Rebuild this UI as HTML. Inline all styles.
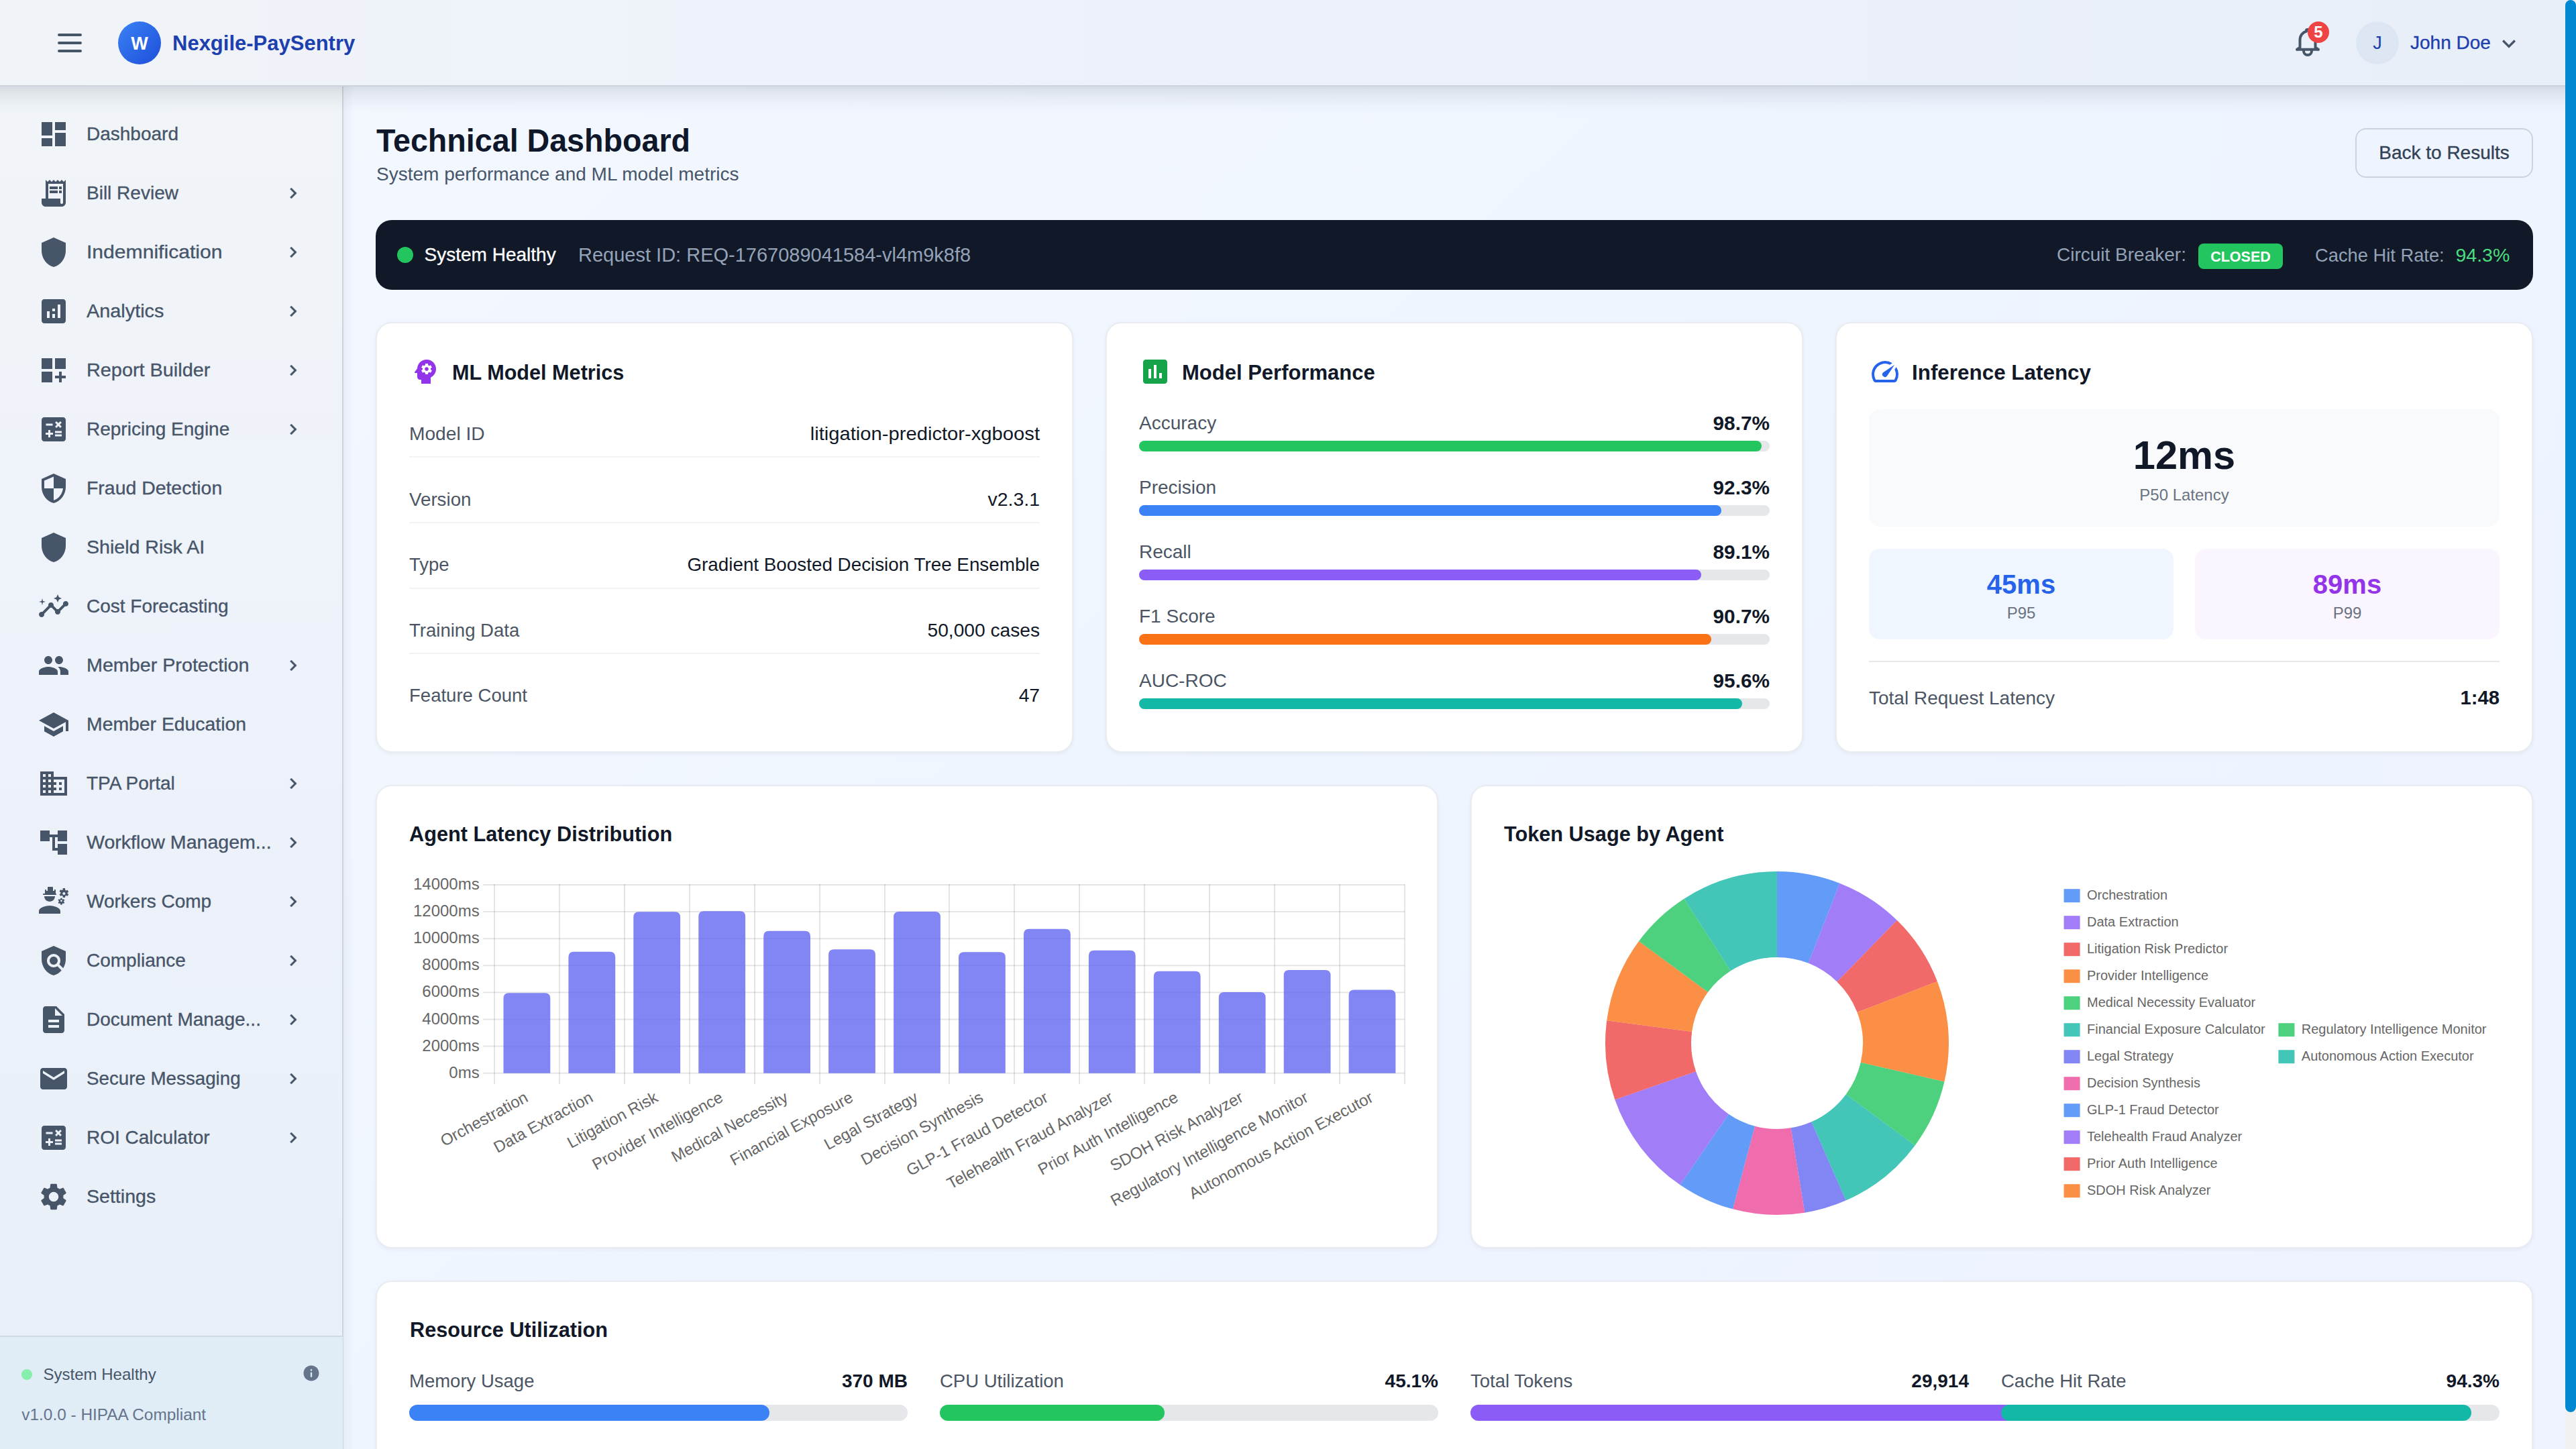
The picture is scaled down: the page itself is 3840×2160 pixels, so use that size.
<!DOCTYPE html><html><head><meta charset="utf-8"><style>
*{box-sizing:border-box;margin:0;padding:0}
html,body{width:3840px;height:2160px;overflow:hidden}
body{position:relative;font-family:"Liberation Sans",sans-serif;background:linear-gradient(135deg,#f4f8ff 0%,#eff5ff 50%,#eef3ff 100%);}
.t{position:absolute;line-height:1;white-space:nowrap}
.r{position:absolute}
</style></head><body><div class="r" style="left:0px;top:0px;width:3824px;height:128px;background:linear-gradient(90deg,#f0f4f8 0%,#eef2fa 28%,#e9eff8 100%);"></div>
<div class="r" style="left:0px;top:127px;width:3824px;height:2px;background:#cbd3dd;"></div>
<div class="r" style="left:86px;top:50px;width:36px;height:4px;background:#475569;border-radius:2px"></div>
<div class="r" style="left:86px;top:62px;width:36px;height:4px;background:#475569;border-radius:2px"></div>
<div class="r" style="left:86px;top:74px;width:36px;height:4px;background:#475569;border-radius:2px"></div>
<div class="r" style="left:176px;top:32px;width:64px;height:64px;border-radius:50%;background:linear-gradient(135deg,#3b82f6,#1d4ed8)"></div>
<div class="t" style="left:208.0px;top:51.6px;font-size:27px;color:#ffffff;font-weight:700;transform:translateX(-50%);transform-origin:50% 0;">W</div>
<div class="t" style="left:257.0px;top:48.8px;font-size:31px;color:#1e40af;font-weight:700;">Nexgile-PaySentry</div>
<svg class="r" style="left:0;top:0" width="3840" height="130" viewBox="0 0 3840 130"><g fill="none" stroke="#475569" stroke-width="4" stroke-linecap="round" stroke-linejoin="round"><path d="M3424 73.8H3456M3428.5 70.5L3424 73.8M3451.5 70.5L3456 73.8M3428.5 71V59.5C3428.5 52.5 3433 47.8 3438 46.8M3442 46.8C3447 47.8 3451.5 52.5 3451.5 59.5V71M3437.5 46.6C3437.5 43 3442.5 43 3442.5 46.6M3434 76A6 6 0 0 0 3446 76"/></g></svg>
<div class="r" style="left:3440px;top:32px;width:32px;height:32px;border-radius:50%;background:#ef4444"></div>
<div class="t" style="left:3456.0px;top:36.2px;font-size:24px;color:#ffffff;font-weight:700;transform:translateX(-50%);transform-origin:50% 0;">5</div>
<div class="r" style="left:3512px;top:32px;width:64px;height:64px;border-radius:50%;background:#dde7f4"></div>
<div class="t" style="left:3544.0px;top:50.7px;font-size:27px;color:#1e40af;font-weight:400;transform:translateX(-50%);transform-origin:50% 0;">J</div>
<div class="t" style="left:3593.0px;top:49.9px;font-size:28px;color:#1e40af;font-weight:400;-webkit-text-stroke:0.35px #1e40af;">John Doe</div>
<svg class="r" style="left:3720px;top:44.7px;overflow:visible" width="40" height="40" viewBox="0 0 24 24"><path fill="#475569" d="M16.59 8.59L12 13.17 7.41 8.59 6 10l6 6 6-6z"/></svg>
<div class="r" style="left:0px;top:130px;width:511px;height:1862px;background:linear-gradient(180deg,#f1f5f8 0%,#eef2fa 45%,#e9f0f8 100%);"></div>
<div class="r" style="left:510px;top:129px;width:2px;height:2031px;background:#cdd4de;"></div>
<div class="r" style="left:512px;top:129px;width:16px;height:2031px;background:linear-gradient(90deg,rgba(60,70,85,0.055),rgba(60,70,85,0));"></div>
<svg class="r" style="left:56px;top:176px;" width="48" height="48" viewBox="0 0 24 24"><path fill="#475569" d="M3 13h8V3H3v10zm0 8h8v-6H3v6zm10 0h8V11h-8v10zm0-18v6h8V3h-8z"/></svg>
<div class="t" style="left:129.0px;top:186.3px;font-size:28px;color:#475569;font-weight:400;-webkit-text-stroke:0.35px #475569;transform:scaleX(1.000);transform-origin:0 0;">Dashboard</div>
<svg class="r" style="left:56px;top:264px;" width="48" height="48" viewBox="0 0 24 24"><path fill="#475569" d="M19.5 3.5 18 2l-1.5 1.5L15 2l-1.5 1.5L12 2l-1.5 1.5L9 2 7.5 3.5 6 2v14H3v3c0 1.66 1.34 3 3 3h12c1.66 0 3-1.34 3-3V2l-1.5 1.5zM19 19c0 .55-.45 1-1 1s-1-.45-1-1v-3H8V5h11v14zM9 7h6v2H9zm7 0h2v2h-2zm-7 3h6v2H9zm7 0h2v2h-2z"/></svg>
<div class="t" style="left:129.0px;top:274.3px;font-size:28px;color:#475569;font-weight:400;-webkit-text-stroke:0.35px #475569;transform:scaleX(1.000);transform-origin:0 0;">Bill Review</div>
<svg class="r" style="left:421px;top:272px" width="32" height="32" viewBox="0 0 24 24"><path fill="#475569" stroke="#475569" stroke-width="0.35" d="M10 6L8.59 7.41 13.17 12l-4.58 4.59L10 18l6-6z"/></svg>
<svg class="r" style="left:56px;top:352px;" width="48" height="48" viewBox="0 0 24 24"><path fill="#475569" d="M12 1L3 5v6c0 5.55 3.84 10.74 9 12 5.16-1.26 9-6.45 9-12V5l-9-4z"/></svg>
<div class="t" style="left:129.0px;top:362.3px;font-size:28px;color:#475569;font-weight:400;-webkit-text-stroke:0.35px #475569;transform:scaleX(1.075);transform-origin:0 0;">Indemnification</div>
<svg class="r" style="left:421px;top:360px" width="32" height="32" viewBox="0 0 24 24"><path fill="#475569" stroke="#475569" stroke-width="0.35" d="M10 6L8.59 7.41 13.17 12l-4.58 4.59L10 18l6-6z"/></svg>
<svg class="r" style="left:56px;top:440px;" width="48" height="48" viewBox="0 0 24 24"><path fill="#475569" d="M19 3H5c-1.1 0-2 .9-2 2v14c0 1.1.9 2 2 2h14c1.1 0 2-.9 2-2V5c0-1.1-.9-2-2-2zM9 17H7v-5h2v5zm4 0h-2v-3h2v3zm0-5h-2v-2h2v2zm4 5h-2V7h2v10z"/></svg>
<div class="t" style="left:129.0px;top:450.3px;font-size:28px;color:#475569;font-weight:400;-webkit-text-stroke:0.35px #475569;transform:scaleX(1.030);transform-origin:0 0;">Analytics</div>
<svg class="r" style="left:421px;top:448px" width="32" height="32" viewBox="0 0 24 24"><path fill="#475569" stroke="#475569" stroke-width="0.35" d="M10 6L8.59 7.41 13.17 12l-4.58 4.59L10 18l6-6z"/></svg>
<svg class="r" style="left:56px;top:528px;" width="48" height="48" viewBox="0 0 24 24"><path fill="#475569" d="M3 3h8v8H3zm10 0h8v8h-8zM3 13h8v8H3zm15 0h-2v3h-3v2h3v3h2v-3h3v-2h-3z"/></svg>
<div class="t" style="left:129.0px;top:538.3px;font-size:28px;color:#475569;font-weight:400;-webkit-text-stroke:0.35px #475569;transform:scaleX(1.030);transform-origin:0 0;">Report Builder</div>
<svg class="r" style="left:421px;top:536px" width="32" height="32" viewBox="0 0 24 24"><path fill="#475569" stroke="#475569" stroke-width="0.35" d="M10 6L8.59 7.41 13.17 12l-4.58 4.59L10 18l6-6z"/></svg>
<svg class="r" style="left:56px;top:616px;" width="48" height="48" viewBox="0 0 24 24"><path fill="#475569" d="M19 3H5c-1.1 0-2 .9-2 2v14c0 1.1.9 2 2 2h14c1.1 0 2-.9 2-2V5c0-1.1-.9-2-2-2zm-5.97 4.06L14.09 6l1.41 1.41L16.91 6l1.06 1.06-1.41 1.41 1.41 1.41-1.06 1.06-1.41-1.4-1.41 1.41-1.06-1.06 1.41-1.41-1.41-1.42zm-6.78.66h5v1.5h-5v-1.5zM11.5 16h-2v2H8v-2H6v-1.5h2v-2h1.5v2h2V16zm6.5 1.25h-5v-1.5h5v1.5zm0-2.5h-5v-1.5h5v1.5z"/></svg>
<div class="t" style="left:129.0px;top:626.3px;font-size:28px;color:#475569;font-weight:400;-webkit-text-stroke:0.35px #475569;transform:scaleX(1.000);transform-origin:0 0;">Repricing Engine</div>
<svg class="r" style="left:421px;top:624px" width="32" height="32" viewBox="0 0 24 24"><path fill="#475569" stroke="#475569" stroke-width="0.35" d="M10 6L8.59 7.41 13.17 12l-4.58 4.59L10 18l6-6z"/></svg>
<svg class="r" style="left:56px;top:704px;" width="48" height="48" viewBox="0 0 24 24"><path fill="#475569" d="M12 1L3 5v6c0 5.55 3.84 10.74 9 12 5.16-1.26 9-6.45 9-12V5l-9-4zm0 10.99h7c-.53 4.12-3.28 7.79-7 8.94V12H5V6.3l7-3.11v8.8z"/></svg>
<div class="t" style="left:129.0px;top:714.3px;font-size:28px;color:#475569;font-weight:400;-webkit-text-stroke:0.35px #475569;transform:scaleX(1.015);transform-origin:0 0;">Fraud Detection</div>
<svg class="r" style="left:56px;top:792px;" width="48" height="48" viewBox="0 0 24 24"><path fill="#475569" d="M12 1L3 5v6c0 5.55 3.84 10.74 9 12 5.16-1.26 9-6.45 9-12V5l-9-4z"/></svg>
<div class="t" style="left:129.0px;top:802.3px;font-size:28px;color:#475569;font-weight:400;-webkit-text-stroke:0.35px #475569;transform:scaleX(1.020);transform-origin:0 0;">Shield Risk AI</div>
<svg class="r" style="left:56px;top:880px;" width="48" height="48" viewBox="0 0 24 24"><path fill="#475569" d="M21 8c-1.45 0-2.26 1.44-1.93 2.51l-3.55 3.56c-.3-.09-.74-.09-1.04 0l-2.55-2.55C12.27 10.45 11.46 9 10 9c-1.45 0-2.27 1.44-1.93 2.52l-4.56 4.55C2.44 15.74 1 16.55 1 18c0 1.1.9 2 2 2 1.45 0 2.26-1.44 1.93-2.51l4.55-4.56c.3.09.74.09 1.04 0l2.55 2.55C12.73 16.55 13.54 18 15 18c1.45 0 2.27-1.44 1.93-2.52l3.56-3.55c1.07.33 2.51-.48 2.51-1.93 0-1.1-.9-2-2-2zM15 9l.94-2.07L18 6l-2.06-.93L15 3l-.92 2.07L12 6l2.08.93zM3.5 11L4 9l2-.5L4 8l-.5-2L3 8l-2 .5L3 9z"/></svg>
<div class="t" style="left:129.0px;top:890.3px;font-size:28px;color:#475569;font-weight:400;-webkit-text-stroke:0.35px #475569;transform:scaleX(1.000);transform-origin:0 0;">Cost Forecasting</div>
<svg class="r" style="left:56px;top:968px;" width="48" height="48" viewBox="0 0 24 24"><path fill="#475569" d="M16 11c1.66 0 2.99-1.34 2.99-3S17.66 5 16 5c-1.66 0-3 1.34-3 3s1.34 3 3 3zm-8 0c1.66 0 2.99-1.34 2.99-3S9.66 5 8 5C6.34 5 5 6.34 5 8s1.34 3 3 3zm0 2c-2.33 0-7 1.17-7 3.5V19h14v-2.5c0-2.33-4.67-3.5-7-3.5zm8 0c-.29 0-.62.02-.97.05 1.16.84 1.97 1.97 1.97 3.45V19h6v-2.5c0-2.33-4.67-3.5-7-3.5z"/></svg>
<div class="t" style="left:129.0px;top:978.3px;font-size:28px;color:#475569;font-weight:400;-webkit-text-stroke:0.35px #475569;transform:scaleX(1.025);transform-origin:0 0;">Member Protection</div>
<svg class="r" style="left:421px;top:976px" width="32" height="32" viewBox="0 0 24 24"><path fill="#475569" stroke="#475569" stroke-width="0.35" d="M10 6L8.59 7.41 13.17 12l-4.58 4.59L10 18l6-6z"/></svg>
<svg class="r" style="left:56px;top:1056px;" width="48" height="48" viewBox="0 0 24 24"><path fill="#475569" d="M5 13.18v4L12 21l7-3.82v-4L12 17l-7-3.82zM12 3L1 9l11 6 9-4.91V17h2V9L12 3z"/></svg>
<div class="t" style="left:129.0px;top:1066.3px;font-size:28px;color:#475569;font-weight:400;-webkit-text-stroke:0.35px #475569;transform:scaleX(1.013);transform-origin:0 0;">Member Education</div>
<svg class="r" style="left:56px;top:1144px;" width="48" height="48" viewBox="0 0 24 24"><path fill="#475569" d="M12 7V3H2v18h20V7H12zM6 19H4v-2h2v2zm0-4H4v-2h2v2zm0-4H4V9h2v2zm0-4H4V5h2v2zm4 12H8v-2h2v2zm0-4H8v-2h2v2zm0-4H8V9h2v2zm0-4H8V5h2v2zm10 12h-8v-2h2v-2h-2v-2h2v-2h-2V9h8v10zm-2-8h-2v2h2v-2zm0 4h-2v2h2v-2z"/></svg>
<div class="t" style="left:129.0px;top:1154.3px;font-size:28px;color:#475569;font-weight:400;-webkit-text-stroke:0.35px #475569;transform:scaleX(1.000);transform-origin:0 0;">TPA Portal</div>
<svg class="r" style="left:421px;top:1152px" width="32" height="32" viewBox="0 0 24 24"><path fill="#475569" stroke="#475569" stroke-width="0.35" d="M10 6L8.59 7.41 13.17 12l-4.58 4.59L10 18l6-6z"/></svg>
<svg class="r" style="left:56px;top:1232px;" width="48" height="48" viewBox="0 0 24 24"><path fill="#475569" d="M22 11V3h-7v3H9V3H2v8h7V8h2v10h4v3h7v-8h-7v3h-2V8h2v3z"/></svg>
<div class="t" style="left:129.0px;top:1242.3px;font-size:28px;color:#475569;font-weight:400;-webkit-text-stroke:0.35px #475569;transform:scaleX(1.020);transform-origin:0 0;">Workflow Managem...</div>
<svg class="r" style="left:421px;top:1240px" width="32" height="32" viewBox="0 0 24 24"><path fill="#475569" stroke="#475569" stroke-width="0.35" d="M10 6L8.59 7.41 13.17 12l-4.58 4.59L10 18l6-6z"/></svg>
<svg class="r" style="left:56px;top:1320px;" width="48" height="48" viewBox="0 0 24 24"><path fill="#475569" d="M9 15c-2.67 0-8 1.34-8 4v2h16v-2c0-2.66-5.33-4-8-4zM5 8c0 2.21 1.79 4 4 4s4-1.79 4-4H5zM13.5 6V3.5c0-.26-.19-.5-.5-.5h-.5v1h-1V1.5c0-.28-.22-.5-.5-.5H8c-.28 0-.5.22-.5.5V4h-1V3H6c-.31 0-.5.24-.5.5V6H4.5c-.28 0-.5.22-.5.5s.22.5.5.5h9c.28 0 .5-.22.5-.5s-.22-.5-.5-.5zM22.17 5.53l.93-.83-.75-1.3-1.19.39c-.14-.11-.3-.2-.47-.27L20.44 2h-1.5l-.25 1.22c-.17.07-.33.16-.48.27l-1.18-.39-.75 1.3.93.83c-.02.17-.02.35 0 .52l-.93.85.75 1.3 1.2-.38c.13.1.28.18.43.25L18.94 9h1.5l.27-1.22c.16-.07.3-.15.44-.25l1.19.38.75-1.3-.93-.85c.03-.19.02-.36.01-.53zM19.69 7c-.55 0-1-.45-1-1s.45-1 1-1 1 .45 1 1-.45 1-1 1zM19.61 10.12l-.85.28c-.1-.08-.21-.14-.33-.19L18.25 9.34h-1.07l-.18.87c-.12.05-.24.12-.34.19l-.84-.28-.54.93.66.59c-.01.13-.01.25 0 .37l-.66.61.54.93.86-.27c.1.07.2.13.31.18l.18.88h1.07l.19-.87c.11-.05.22-.11.32-.18l.85.27.54-.93-.66-.61c.01-.13.01-.25 0-.37l.66-.59-.53-.94zM17.72 12.12c-.39 0-.71-.32-.71-.71s.32-.71.71-.71.71.32.71.71-.32.71-.71.71z"/></svg>
<div class="t" style="left:129.0px;top:1330.3px;font-size:28px;color:#475569;font-weight:400;-webkit-text-stroke:0.35px #475569;transform:scaleX(1.000);transform-origin:0 0;">Workers Comp</div>
<svg class="r" style="left:421px;top:1328px" width="32" height="32" viewBox="0 0 24 24"><path fill="#475569" stroke="#475569" stroke-width="0.35" d="M10 6L8.59 7.41 13.17 12l-4.58 4.59L10 18l6-6z"/></svg>
<svg class="r" style="left:56px;top:1408px;" width="48" height="48" viewBox="0 0 24 24"><path fill="#475569" d="M21 5l-9-4-9 4v6c0 5.55 3.84 10.74 9 12 2.3-.56 4.33-1.9 5.88-3.71l-3.12-3.12c-1.94 1.29-4.58 1.07-6.29-.64-1.95-1.95-1.95-5.12 0-7.07 1.95-1.95 5.12-1.95 7.07 0 1.71 1.71 1.92 4.35.64 6.29l2.9 2.9C20.29 15.69 21 13.38 21 11V5zM12 15c1.66 0 3-1.34 3-3s-1.34-3-3-3-3 1.34-3 3 1.34 3 3 3z"/></svg>
<div class="t" style="left:129.0px;top:1418.3px;font-size:28px;color:#475569;font-weight:400;-webkit-text-stroke:0.35px #475569;transform:scaleX(1.000);transform-origin:0 0;">Compliance</div>
<svg class="r" style="left:421px;top:1416px" width="32" height="32" viewBox="0 0 24 24"><path fill="#475569" stroke="#475569" stroke-width="0.35" d="M10 6L8.59 7.41 13.17 12l-4.58 4.59L10 18l6-6z"/></svg>
<svg class="r" style="left:56px;top:1496px;" width="48" height="48" viewBox="0 0 24 24"><path fill="#475569" d="M14 2H6c-1.1 0-1.99.9-1.99 2L4 20c0 1.1.89 2 1.99 2H18c1.1 0 2-.9 2-2V8l-6-6zm2 16H8v-2h8v2zm0-4H8v-2h8v2zm-3-5V3.5L18.5 9H13z"/></svg>
<div class="t" style="left:129.0px;top:1506.3px;font-size:28px;color:#475569;font-weight:400;-webkit-text-stroke:0.35px #475569;transform:scaleX(1.000);transform-origin:0 0;">Document Manage...</div>
<svg class="r" style="left:421px;top:1504px" width="32" height="32" viewBox="0 0 24 24"><path fill="#475569" stroke="#475569" stroke-width="0.35" d="M10 6L8.59 7.41 13.17 12l-4.58 4.59L10 18l6-6z"/></svg>
<svg class="r" style="left:56px;top:1584px;" width="48" height="48" viewBox="0 0 24 24"><path fill="#475569" d="M20 4H4c-1.1 0-1.99.9-1.99 2L2 18c0 1.1.9 2 2 2h16c1.1 0 2-.9 2-2V6c0-1.1-.9-2-2-2zm0 4l-8 5-8-5V6l8 5 8-5v2z"/></svg>
<div class="t" style="left:129.0px;top:1594.3px;font-size:28px;color:#475569;font-weight:400;-webkit-text-stroke:0.35px #475569;transform:scaleX(0.990);transform-origin:0 0;">Secure Messaging</div>
<svg class="r" style="left:421px;top:1592px" width="32" height="32" viewBox="0 0 24 24"><path fill="#475569" stroke="#475569" stroke-width="0.35" d="M10 6L8.59 7.41 13.17 12l-4.58 4.59L10 18l6-6z"/></svg>
<svg class="r" style="left:56px;top:1672px;" width="48" height="48" viewBox="0 0 24 24"><path fill="#475569" d="M19 3H5c-1.1 0-2 .9-2 2v14c0 1.1.9 2 2 2h14c1.1 0 2-.9 2-2V5c0-1.1-.9-2-2-2zm-5.97 4.06L14.09 6l1.41 1.41L16.91 6l1.06 1.06-1.41 1.41 1.41 1.41-1.06 1.06-1.41-1.4-1.41 1.41-1.06-1.06 1.41-1.41-1.41-1.42zm-6.78.66h5v1.5h-5v-1.5zM11.5 16h-2v2H8v-2H6v-1.5h2v-2h1.5v2h2V16zm6.5 1.25h-5v-1.5h5v1.5zm0-2.5h-5v-1.5h5v1.5z"/></svg>
<div class="t" style="left:129.0px;top:1682.3px;font-size:28px;color:#475569;font-weight:400;-webkit-text-stroke:0.35px #475569;transform:scaleX(1.000);transform-origin:0 0;">ROI Calculator</div>
<svg class="r" style="left:421px;top:1680px" width="32" height="32" viewBox="0 0 24 24"><path fill="#475569" stroke="#475569" stroke-width="0.35" d="M10 6L8.59 7.41 13.17 12l-4.58 4.59L10 18l6-6z"/></svg>
<svg class="r" style="left:56px;top:1760px;" width="48" height="48" viewBox="0 0 24 24"><path fill="#475569" d="M19.14 12.94c.04-.3.06-.61.06-.94 0-.32-.02-.64-.07-.94l2.03-1.58c.18-.14.23-.41.12-.61l-1.92-3.32c-.12-.22-.37-.29-.59-.22l-2.39.96c-.5-.38-1.03-.7-1.62-.94l-.36-2.54c-.04-.24-.24-.41-.48-.41h-3.84c-.24 0-.43.17-.47.41l-.36 2.54c-.59.24-1.13.57-1.62.94l-2.39-.96c-.22-.08-.47 0-.59.22L2.74 8.87c-.12.21-.08.47.12.61l2.03 1.58c-.05.3-.09.63-.09.94s.02.64.07.94l-2.03 1.58c-.18.14-.23.41-.12.61l1.92 3.32c.12.22.37.29.59.22l2.39-.96c.5.38 1.03.7 1.62.94l.36 2.54c.05.24.24.41.48.41h3.84c.24 0 .44-.17.47-.41l.36-2.54c.59-.24 1.13-.56 1.62-.94l2.39.96c.22.08.47 0 .59-.22l1.92-3.32c.12-.22.07-.47-.12-.61l-2.01-1.58zM12 15.6c-1.98 0-3.6-1.62-3.6-3.6s1.62-3.6 3.6-3.6 3.6 1.62 3.6 3.6-1.62 3.6-3.6 3.6z"/></svg>
<div class="t" style="left:129.0px;top:1770.3px;font-size:28px;color:#475569;font-weight:400;-webkit-text-stroke:0.35px #475569;transform:scaleX(1.020);transform-origin:0 0;">Settings</div>
<div class="r" style="left:0px;top:1991px;width:511px;height:2px;background:#cfd9e4;"></div>
<div class="r" style="left:0px;top:1993px;width:511px;height:167px;background:#e0ecf6;"></div>
<div class="r" style="left:32px;top:2041px;width:16px;height:16px;border-radius:50%;background:#86efac"></div>
<div class="t" style="left:64.6px;top:2037.4px;font-size:24px;color:#475569;font-weight:400;">System Healthy</div>
<svg class="r" style="left:452px;top:2035px;transform:scale(1.15);" width="24" height="24" viewBox="0 0 24 24"><path fill="#64748b" d="M12 2C6.48 2 2 6.48 2 12s4.48 10 10 10 10-4.48 10-10S17.52 2 12 2zm1 15h-2v-6h2v6zm0-8h-2V7h2v2z"/></svg>
<div class="t" style="left:32.3px;top:2096.5px;font-size:24.4px;color:#64748b;font-weight:400;">v1.0.0 - HIPAA Compliant</div>
<div class="r" style="left:0px;top:129px;width:3824px;height:42px;background:linear-gradient(180deg,rgba(60,70,85,0.15) 0px,rgba(60,70,85,0.12) 4px,rgba(60,70,85,0.085) 10px,rgba(60,70,85,0.05) 20px,rgba(60,70,85,0.02) 30px,rgba(60,70,85,0) 42px);"></div>
<div class="t" style="left:561.0px;top:186.4px;font-size:48px;color:#0f172a;font-weight:700;transform: scaleX(0.9712);transform-origin:0 0;">Technical Dashboard</div>
<div class="t" style="left:561.0px;top:246.3px;font-size:28px;color:#475569;font-weight:400;">System performance and ML model metrics</div>
<div class="r" style="left:3511px;top:191px;width:265px;height:74px;border:2px solid #cdd3dc;border-radius:16px"></div>
<div class="t" style="left:3643.5px;top:214.3px;font-size:28px;color:#334155;font-weight:400;transform:translateX(-50%);transform-origin:50% 0;-webkit-text-stroke:0.35px #334155;">Back to Results</div>
<div class="r" style="left:560px;top:328px;width:3216px;height:104px;background:#111827;border-radius:24px"></div>
<div class="r" style="left:592px;top:368px;width:24px;height:24px;border-radius:50%;background:#22c55e"></div>
<div class="t" style="left:632.6px;top:366.3px;font-size:28px;color:#ffffff;font-weight:400;-webkit-text-stroke:0.3px #ffffff;">System Healthy</div>
<div class="t" style="left:862.0px;top:365.5px;font-size:29px;color:#94a3b8;font-weight:400;">Request ID: REQ-1767089041584-vl4m9k8f8</div>
<div class="t" style="left:3066.0px;top:366.3px;font-size:28px;color:#94a3b8;font-weight:400;">Circuit Breaker:</div>
<div class="r" style="left:3277px;top:363px;width:126px;height:38px;background:#22c55e;border-radius:8px"></div>
<div class="t" style="left:3340.0px;top:372.8px;font-size:21.5px;color:#ffffff;font-weight:700;transform:translateX(-50%);transform-origin:50% 0;">CLOSED</div>
<div class="t" style="left:3451.0px;top:366.9px;font-size:27.3px;color:#94a3b8;font-weight:400;">Cache Hit Rate:</div>
<div class="t" style="left:3660.5px;top:365.9px;font-size:28.5px;color:#4ade80;font-weight:400;">94.3%</div>
<div class="r" style="left:560px;top:480px;width:1040px;height:642px;background:#fff;border:2px solid #e8ebf0;border-radius:24px;box-shadow:0 2px 6px rgba(15,23,42,0.05)"></div>
<svg class="r" style="left:610px;top:530px;" width="48" height="48" viewBox="0 0 24 24"><path fill="#9333ea" d="M13 8.57c-.79 0-1.43.64-1.43 1.43s.64 1.43 1.43 1.43 1.43-.64 1.43-1.43-.64-1.43-1.43-1.43zM13 3C9.25 3 6.2 5.94 6.02 9.64L4.1 12.2c-.25.33-.01.8.4.8H6v3c0 1.1.9 2 2 2h1v3h7v-4.68c2.36-1.12 4-3.53 4-6.32 0-3.87-3.13-7-7-7zm3 7c0 .13-.01.26-.02.39l.83.66c.08.06.1.16.05.25l-.8 1.39c-.05.09-.16.12-.24.09l-.99-.4c-.21.16-.43.29-.67.39L14 13.83c-.01.1-.1.17-.2.17h-1.6c-.1 0-.18-.07-.2-.17l-.15-1.06c-.25-.1-.47-.23-.68-.39l-.99.4c-.09.03-.2 0-.25-.09l-.8-1.39c-.05-.08-.03-.19.05-.25l.84-.66c-.01-.13-.02-.26-.02-.39s.02-.27.04-.39l-.85-.66c-.08-.06-.1-.16-.05-.26l.8-1.38c.05-.09.15-.12.24-.09l1 .4c.2-.15.43-.29.67-.39L12 6.17c.02-.1.1-.17.2-.17h1.6c.1 0 .18.07.2.17l.15 1.06c.24.1.46.23.67.39l1-.4c.09-.03.2 0 .24.09l.8 1.38c.05.09.03.2-.05.26l-.85.66c.03.12.04.25.04.39z"/></svg>
<div class="t" style="left:674.0px;top:539.9px;font-size:31.5px;color:#111827;font-weight:700;transform: scaleX(0.9719);transform-origin:0 0;">ML Model Metrics</div>
<div class="t" style="left:610.0px;top:633.3px;font-size:28px;color:#4b5563;font-weight:400;transform: scaleX(1.0054);transform-origin:0 0;">Model ID</div>
<div class="t" style="left:1550.0px;top:633.3px;font-size:28px;color:#111827;font-weight:400;transform:translateX(-100%) scaleX(1.0423);transform-origin:100% 0;">litigation-predictor-xgboost</div>
<div class="r" style="left:610px;top:680px;width:940px;height:2px;background:#f1f3f6;"></div>
<div class="t" style="left:610.0px;top:730.8px;font-size:28px;color:#4b5563;font-weight:400;transform: scaleX(0.9904);transform-origin:0 0;">Version</div>
<div class="t" style="left:1550.0px;top:730.8px;font-size:28px;color:#111827;font-weight:400;transform:translateX(-100%) scaleX(1.0144);transform-origin:100% 0;">v2.3.1</div>
<div class="r" style="left:610px;top:778px;width:940px;height:2px;background:#f1f3f6;"></div>
<div class="t" style="left:610.0px;top:828.3px;font-size:28px;color:#4b5563;font-weight:400;transform: scaleX(0.9819);transform-origin:0 0;">Type</div>
<div class="t" style="left:1550.0px;top:828.3px;font-size:28px;color:#111827;font-weight:400;transform:translateX(-100%) scaleX(0.9932);transform-origin:100% 0;">Gradient Boosted Decision Tree Ensemble</div>
<div class="r" style="left:610px;top:876px;width:940px;height:2px;background:#f1f3f6;"></div>
<div class="t" style="left:610.0px;top:925.8px;font-size:28px;color:#4b5563;font-weight:400;transform: scaleX(0.9832);transform-origin:0 0;">Training Data</div>
<div class="t" style="left:1550.0px;top:925.8px;font-size:28px;color:#111827;font-weight:400;transform:translateX(-100%) scaleX(1.0054);transform-origin:100% 0;">50,000 cases</div>
<div class="r" style="left:610px;top:973px;width:940px;height:2px;background:#f1f3f6;"></div>
<div class="t" style="left:610.0px;top:1023.3px;font-size:28px;color:#4b5563;font-weight:400;transform: scaleX(0.9832);transform-origin:0 0;">Feature Count</div>
<div class="t" style="left:1550.0px;top:1023.3px;font-size:28px;color:#111827;font-weight:400;transform:translateX(-100%) scaleX(1.0064);transform-origin:100% 0;">47</div>
<div class="r" style="left:1648px;top:480px;width:1040px;height:642px;background:#fff;border:2px solid #e8ebf0;border-radius:24px;box-shadow:0 2px 6px rgba(15,23,42,0.05)"></div>
<svg class="r" style="left:1698px;top:530px;" width="48" height="48" viewBox="0 0 24 24"><path fill="#16a34a" d="M19 3H5c-1.1 0-2 .9-2 2v14c0 1.1.9 2 2 2h14c1.1 0 2-.9 2-2V5c0-1.1-.9-2-2-2zM9 17H7v-7h2v7zm4 0h-2V7h2v10zm4 0h-2v-4h2v4z"/></svg>
<div class="t" style="left:1762.0px;top:539.9px;font-size:31.5px;color:#111827;font-weight:700;transform: scaleX(0.9843);transform-origin:0 0;">Model Performance</div>
<div class="t" style="left:1698.0px;top:617.0px;font-size:28px;color:#4b5563;font-weight:400;">Accuracy</div>
<div class="t" style="left:2638.0px;top:615.7px;font-size:29.5px;color:#111827;font-weight:700;transform:translateX(-100%) scaleX(1.0096);transform-origin:100% 0;">98.7%</div>
<div class="r" style="left:1698px;top:657px;width:940px;height:16px;background:#e5e7eb;border-radius:8px"></div>
<div class="r" style="left:1698px;top:657px;width:928px;height:16px;background:#22c55e;border-radius:8px"></div>
<div class="t" style="left:1698.0px;top:713.0px;font-size:28px;color:#4b5563;font-weight:400;">Precision</div>
<div class="t" style="left:2638.0px;top:711.7px;font-size:29.5px;color:#111827;font-weight:700;transform:translateX(-100%) scaleX(1.0096);transform-origin:100% 0;">92.3%</div>
<div class="r" style="left:1698px;top:753px;width:940px;height:16px;background:#e5e7eb;border-radius:8px"></div>
<div class="r" style="left:1698px;top:753px;width:868px;height:16px;background:#3b82f6;border-radius:8px"></div>
<div class="t" style="left:1698.0px;top:809.0px;font-size:28px;color:#4b5563;font-weight:400;">Recall</div>
<div class="t" style="left:2638.0px;top:807.7px;font-size:29.5px;color:#111827;font-weight:700;transform:translateX(-100%) scaleX(1.0096);transform-origin:100% 0;">89.1%</div>
<div class="r" style="left:1698px;top:849px;width:940px;height:16px;background:#e5e7eb;border-radius:8px"></div>
<div class="r" style="left:1698px;top:849px;width:838px;height:16px;background:#8b5cf6;border-radius:8px"></div>
<div class="t" style="left:1698.0px;top:905.0px;font-size:28px;color:#4b5563;font-weight:400;">F1 Score</div>
<div class="t" style="left:2638.0px;top:903.7px;font-size:29.5px;color:#111827;font-weight:700;transform:translateX(-100%) scaleX(1.0096);transform-origin:100% 0;">90.7%</div>
<div class="r" style="left:1698px;top:945px;width:940px;height:16px;background:#e5e7eb;border-radius:8px"></div>
<div class="r" style="left:1698px;top:945px;width:853px;height:16px;background:#f97316;border-radius:8px"></div>
<div class="t" style="left:1698.0px;top:1001.0px;font-size:28px;color:#4b5563;font-weight:400;">AUC-ROC</div>
<div class="t" style="left:2638.0px;top:999.7px;font-size:29.5px;color:#111827;font-weight:700;transform:translateX(-100%) scaleX(1.0096);transform-origin:100% 0;">95.6%</div>
<div class="r" style="left:1698px;top:1041px;width:940px;height:16px;background:#e5e7eb;border-radius:8px"></div>
<div class="r" style="left:1698px;top:1041px;width:899px;height:16px;background:#14b8a6;border-radius:8px"></div>
<div class="r" style="left:2736px;top:480px;width:1040px;height:642px;background:#fff;border:2px solid #e8ebf0;border-radius:24px;box-shadow:0 2px 6px rgba(15,23,42,0.05)"></div>
<svg class="r" style="left:2786px;top:530px;" width="48" height="48" viewBox="0 0 24 24"><path fill="#2563eb" d="M20.38 8.57l-1.23 1.85a8 8 0 0 1-.22 7.58H5.07A8 8 0 0 1 15.58 6.85l1.85-1.23A10 10 0 0 0 3.35 19a2 2 0 0 0 1.72 1h13.85a2 2 0 0 0 1.74-1 10 10 0 0 0-.27-10.44zm-9.79 6.84a2 2 0 0 0 2.83 0l5.66-8.49-8.49 5.66a2 2 0 0 0 0 2.83z"/></svg>
<div class="t" style="left:2850.0px;top:539.9px;font-size:31.5px;color:#111827;font-weight:700;transform: scaleX(0.9970);transform-origin:0 0;">Inference Latency</div>
<div class="r" style="left:2786px;top:610px;width:940px;height:175px;background:#f8fafc;border-radius:16px"></div>
<div class="t" style="left:3256.0px;top:648.6px;font-size:60px;color:#111827;font-weight:700;transform:translateX(-50%) scaleX(0.9935);transform-origin:50% 0;">12ms</div>
<div class="t" style="left:3256.0px;top:726.0px;font-size:24px;color:#6b7280;font-weight:400;transform:translateX(-50%);transform-origin:50% 0;">P50 Latency</div>
<div class="r" style="left:2786px;top:818px;width:454px;height:135px;background:#eff6ff;border-radius:16px"></div>
<div class="r" style="left:3272px;top:818px;width:454px;height:135px;background:#faf5ff;border-radius:16px"></div>
<div class="t" style="left:3013.0px;top:850.5px;font-size:40.5px;color:#2563eb;font-weight:700;transform:translateX(-50%) scaleX(0.9875);transform-origin:50% 0;">45ms</div>
<div class="t" style="left:3013.0px;top:902.1px;font-size:24px;color:#6b7280;font-weight:400;transform:translateX(-50%);transform-origin:50% 0;">P95</div>
<div class="t" style="left:3499.0px;top:850.5px;font-size:40.5px;color:#9333ea;font-weight:700;transform:translateX(-50%) scaleX(0.9875);transform-origin:50% 0;">89ms</div>
<div class="t" style="left:3499.0px;top:902.1px;font-size:24px;color:#6b7280;font-weight:400;transform:translateX(-50%);transform-origin:50% 0;">P99</div>
<div class="r" style="left:2786px;top:985px;width:940px;height:2px;background:#e5e7eb;"></div>
<div class="t" style="left:2786.0px;top:1026.7px;font-size:28px;color:#4b5563;font-weight:400;">Total Request Latency</div>
<div class="t" style="left:3726.0px;top:1025.4px;font-size:29.5px;color:#111827;font-weight:700;transform:translateX(-100%) scaleX(0.9915);transform-origin:100% 0;">1:48</div>
<div class="r" style="left:560px;top:1170px;width:1584px;height:691px;background:#fff;border:2px solid #e8ebf0;border-radius:24px;box-shadow:0 2px 6px rgba(15,23,42,0.05)"></div>
<div class="t" style="left:610.0px;top:1228.5px;font-size:30.7px;color:#111827;font-weight:700;">Agent Latency Distribution</div>
<svg class="r" style="left:0;top:0" width="3840" height="2160" viewBox="0 0 3840 2160"><rect x="720" y="1598.70" width="1374.0" height="2" fill="rgba(0,0,0,0.1)"/><text x="714.7" y="1606.70" text-anchor="end" font-size="24" fill="#666">0ms</text><rect x="720" y="1558.60" width="1374.0" height="2" fill="rgba(0,0,0,0.1)"/><text x="714.7" y="1566.60" text-anchor="end" font-size="24" fill="#666">2000ms</text><rect x="720" y="1518.50" width="1374.0" height="2" fill="rgba(0,0,0,0.1)"/><text x="714.7" y="1526.50" text-anchor="end" font-size="24" fill="#666">4000ms</text><rect x="720" y="1478.40" width="1374.0" height="2" fill="rgba(0,0,0,0.1)"/><text x="714.7" y="1486.40" text-anchor="end" font-size="24" fill="#666">6000ms</text><rect x="720" y="1438.30" width="1374.0" height="2" fill="rgba(0,0,0,0.1)"/><text x="714.7" y="1446.30" text-anchor="end" font-size="24" fill="#666">8000ms</text><rect x="720" y="1398.20" width="1374.0" height="2" fill="rgba(0,0,0,0.1)"/><text x="714.7" y="1406.20" text-anchor="end" font-size="24" fill="#666">10000ms</text><rect x="720" y="1358.10" width="1374.0" height="2" fill="rgba(0,0,0,0.1)"/><text x="714.7" y="1366.10" text-anchor="end" font-size="24" fill="#666">12000ms</text><rect x="720" y="1318.00" width="1374.0" height="2" fill="rgba(0,0,0,0.1)"/><text x="714.7" y="1326.00" text-anchor="end" font-size="24" fill="#666">14000ms</text><rect x="736" y="1318.0" width="2" height="298.0" fill="rgba(0,0,0,0.1)"/><rect x="833" y="1318.0" width="2" height="298.0" fill="rgba(0,0,0,0.1)"/><rect x="930" y="1318.0" width="2" height="298.0" fill="rgba(0,0,0,0.1)"/><rect x="1027" y="1318.0" width="2" height="298.0" fill="rgba(0,0,0,0.1)"/><rect x="1124" y="1318.0" width="2" height="298.0" fill="rgba(0,0,0,0.1)"/><rect x="1221" y="1318.0" width="2" height="298.0" fill="rgba(0,0,0,0.1)"/><rect x="1318" y="1318.0" width="2" height="298.0" fill="rgba(0,0,0,0.1)"/><rect x="1414" y="1318.0" width="2" height="298.0" fill="rgba(0,0,0,0.1)"/><rect x="1511" y="1318.0" width="2" height="298.0" fill="rgba(0,0,0,0.1)"/><rect x="1608" y="1318.0" width="2" height="298.0" fill="rgba(0,0,0,0.1)"/><rect x="1705" y="1318.0" width="2" height="298.0" fill="rgba(0,0,0,0.1)"/><rect x="1802" y="1318.0" width="2" height="298.0" fill="rgba(0,0,0,0.1)"/><rect x="1899" y="1318.0" width="2" height="298.0" fill="rgba(0,0,0,0.1)"/><rect x="1996" y="1318.0" width="2" height="298.0" fill="rgba(0,0,0,0.1)"/><rect x="2093" y="1318.0" width="2" height="298.0" fill="rgba(0,0,0,0.1)"/><path d="M750.5 1599.7 V1488.2 Q750.5 1480.2 758.5 1480.2 H812.3 Q820.3 1480.2 820.3 1488.2 V1599.7 Z" fill="rgba(99,102,241,0.8)"/><path d="M847.4 1599.7 V1426.8 Q847.4 1418.8 855.4 1418.8 H909.2 Q917.2 1418.8 917.2 1426.8 V1599.7 Z" fill="rgba(99,102,241,0.8)"/><path d="M944.3 1599.7 V1367.3 Q944.3 1359.3 952.3 1359.3 H1006.1 Q1014.1 1359.3 1014.1 1367.3 V1599.7 Z" fill="rgba(99,102,241,0.8)"/><path d="M1041.3 1599.7 V1366.3 Q1041.3 1358.3 1049.3 1358.3 H1103.1 Q1111.1 1358.3 1111.1 1366.3 V1599.7 Z" fill="rgba(99,102,241,0.8)"/><path d="M1138.2 1599.7 V1395.7 Q1138.2 1387.7 1146.2 1387.7 H1200.0 Q1208.0 1387.7 1208.0 1395.7 V1599.7 Z" fill="rgba(99,102,241,0.8)"/><path d="M1235.1 1599.7 V1423.3 Q1235.1 1415.3 1243.1 1415.3 H1296.9 Q1304.9 1415.3 1304.9 1423.3 V1599.7 Z" fill="rgba(99,102,241,0.8)"/><path d="M1332.1 1599.7 V1366.9 Q1332.1 1358.9 1340.1 1358.9 H1393.9 Q1401.9 1358.9 1401.9 1366.9 V1599.7 Z" fill="rgba(99,102,241,0.8)"/><path d="M1429.0 1599.7 V1427.2 Q1429.0 1419.2 1437.0 1419.2 H1490.8 Q1498.8 1419.2 1498.8 1427.2 V1599.7 Z" fill="rgba(99,102,241,0.8)"/><path d="M1526.0 1599.7 V1392.8 Q1526.0 1384.8 1534.0 1384.8 H1587.8 Q1595.8 1384.8 1595.8 1392.8 V1599.7 Z" fill="rgba(99,102,241,0.8)"/><path d="M1622.9 1599.7 V1424.8 Q1622.9 1416.8 1630.9 1416.8 H1684.7 Q1692.7 1416.8 1692.7 1424.8 V1599.7 Z" fill="rgba(99,102,241,0.8)"/><path d="M1719.8 1599.7 V1455.7 Q1719.8 1447.7 1727.8 1447.7 H1781.6 Q1789.6 1447.7 1789.6 1455.7 V1599.7 Z" fill="rgba(99,102,241,0.8)"/><path d="M1816.8 1599.7 V1487.0 Q1816.8 1479.0 1824.8 1479.0 H1878.6 Q1886.6 1479.0 1886.6 1487.0 V1599.7 Z" fill="rgba(99,102,241,0.8)"/><path d="M1913.7 1599.7 V1454.0 Q1913.7 1446.0 1921.7 1446.0 H1975.5 Q1983.5 1446.0 1983.5 1454.0 V1599.7 Z" fill="rgba(99,102,241,0.8)"/><path d="M2010.6 1599.7 V1483.6 Q2010.6 1475.6 2018.6 1475.6 H2072.4 Q2080.4 1475.6 2080.4 1483.6 V1599.7 Z" fill="rgba(99,102,241,0.8)"/><text transform="translate(778.49 1622) rotate(-28.53)" x="0" y="21.4" text-anchor="end" font-size="24" fill="#666">Orchestration</text><text transform="translate(875.42 1622) rotate(-28.53)" x="0" y="21.4" text-anchor="end" font-size="24" fill="#666">Data Extraction</text><text transform="translate(972.36 1622) rotate(-28.53)" x="0" y="21.4" text-anchor="end" font-size="24" fill="#666">Litigation Risk</text><text transform="translate(1069.29 1622) rotate(-28.53)" x="0" y="21.4" text-anchor="end" font-size="24" fill="#666">Provider Intelligence</text><text transform="translate(1166.23 1622) rotate(-28.53)" x="0" y="21.4" text-anchor="end" font-size="24" fill="#666">Medical Necessity</text><text transform="translate(1263.17 1622) rotate(-28.53)" x="0" y="21.4" text-anchor="end" font-size="24" fill="#666">Financial Exposure</text><text transform="translate(1360.10 1622) rotate(-28.53)" x="0" y="21.4" text-anchor="end" font-size="24" fill="#666">Legal Strategy</text><text transform="translate(1457.04 1622) rotate(-28.53)" x="0" y="21.4" text-anchor="end" font-size="24" fill="#666">Decision Synthesis</text><text transform="translate(1553.97 1622) rotate(-28.53)" x="0" y="21.4" text-anchor="end" font-size="24" fill="#666">GLP-1 Fraud Detector</text><text transform="translate(1650.91 1622) rotate(-28.53)" x="0" y="21.4" text-anchor="end" font-size="24" fill="#666">Telehealth Fraud Analyzer</text><text transform="translate(1747.84 1622) rotate(-28.53)" x="0" y="21.4" text-anchor="end" font-size="24" fill="#666">Prior Auth Intelligence</text><text transform="translate(1844.78 1622) rotate(-28.53)" x="0" y="21.4" text-anchor="end" font-size="24" fill="#666">SDOH Risk Analyzer</text><text transform="translate(1941.72 1622) rotate(-28.53)" x="0" y="21.4" text-anchor="end" font-size="24" fill="#666">Regulatory Intelligence Monitor</text><text transform="translate(2038.65 1622) rotate(-28.53)" x="0" y="21.4" text-anchor="end" font-size="24" fill="#666">Autonomous Action Executor</text></svg>
<div class="r" style="left:2192px;top:1170px;width:1584px;height:691px;background:#fff;border:2px solid #e8ebf0;border-radius:24px;box-shadow:0 2px 6px rgba(15,23,42,0.05)"></div>
<div class="t" style="left:2242.0px;top:1229.0px;font-size:30.7px;color:#111827;font-weight:700;">Token Usage by Agent</div>
<svg class="r" style="left:0;top:0" width="3840" height="2160" viewBox="0 0 3840 2160"><path d="M2649.00 1299.00 A256.0 256.0 0 0 1 2742.49 1316.68 L2695.75 1435.84 A128.0 128.0 0 0 0 2649.00 1427.00 Z" fill="rgba(59,130,246,0.8)"/><path d="M2742.49 1316.68 A256.0 256.0 0 0 1 2827.86 1371.85 L2738.43 1463.42 A128.0 128.0 0 0 0 2695.75 1435.84 Z" fill="rgba(139,92,246,0.8)"/><path d="M2827.86 1371.85 A256.0 256.0 0 0 1 2887.93 1463.09 L2768.47 1509.05 A128.0 128.0 0 0 0 2738.43 1463.42 Z" fill="rgba(239,68,68,0.8)"/><path d="M2887.93 1463.09 A256.0 256.0 0 0 1 2898.45 1612.54 L2773.72 1583.77 A128.0 128.0 0 0 0 2768.47 1509.05 Z" fill="rgba(249,115,22,0.8)"/><path d="M2898.45 1612.54 A256.0 256.0 0 0 1 2854.71 1707.38 L2751.85 1631.19 A128.0 128.0 0 0 0 2773.72 1583.77 Z" fill="rgba(34,197,94,0.8)"/><path d="M2854.71 1707.38 A256.0 256.0 0 0 1 2751.65 1789.52 L2700.33 1672.26 A128.0 128.0 0 0 0 2751.85 1631.19 Z" fill="rgba(20,184,166,0.8)"/><path d="M2751.65 1789.52 A256.0 256.0 0 0 1 2690.24 1807.66 L2669.62 1681.33 A128.0 128.0 0 0 0 2700.33 1672.26 Z" fill="rgba(99,102,241,0.8)"/><path d="M2690.24 1807.66 A256.0 256.0 0 0 1 2583.04 1802.36 L2616.02 1678.68 A128.0 128.0 0 0 0 2669.62 1681.33 Z" fill="rgba(236,72,153,0.8)"/><path d="M2583.04 1802.36 A256.0 256.0 0 0 1 2504.55 1766.36 L2576.78 1660.68 A128.0 128.0 0 0 0 2616.02 1678.68 Z" fill="rgba(59,130,246,0.8)"/><path d="M2504.55 1766.36 A256.0 256.0 0 0 1 2407.30 1639.36 L2528.15 1597.18 A128.0 128.0 0 0 0 2576.78 1660.68 Z" fill="rgba(139,92,246,0.8)"/><path d="M2407.30 1639.36 A256.0 256.0 0 0 1 2395.24 1521.19 L2522.12 1538.09 A128.0 128.0 0 0 0 2528.15 1597.18 Z" fill="rgba(239,68,68,0.8)"/><path d="M2395.24 1521.19 A256.0 256.0 0 0 1 2442.97 1403.05 L2545.99 1479.02 A128.0 128.0 0 0 0 2522.12 1538.09 Z" fill="rgba(249,115,22,0.8)"/><path d="M2442.97 1403.05 A256.0 256.0 0 0 1 2510.51 1339.69 L2579.76 1447.35 A128.0 128.0 0 0 0 2545.99 1479.02 Z" fill="rgba(34,197,94,0.8)"/><path d="M2510.51 1339.69 A256.0 256.0 0 0 1 2649.00 1299.00 L2649.00 1427.00 A128.0 128.0 0 0 0 2579.76 1447.35 Z" fill="rgba(20,184,166,0.8)"/><rect x="3076.6" y="1325.2" width="24" height="20" fill="rgba(59,130,246,0.8)"/><text x="3111.0" y="1341.0" font-size="20" fill="#666">Orchestration</text><rect x="3076.6" y="1365.2" width="24" height="20" fill="rgba(139,92,246,0.8)"/><text x="3111.0" y="1381.0" font-size="20" fill="#666">Data Extraction</text><rect x="3076.6" y="1405.2" width="24" height="20" fill="rgba(239,68,68,0.8)"/><text x="3111.0" y="1421.0" font-size="20" fill="#666">Litigation Risk Predictor</text><rect x="3076.6" y="1445.2" width="24" height="20" fill="rgba(249,115,22,0.8)"/><text x="3111.0" y="1461.0" font-size="20" fill="#666">Provider Intelligence</text><rect x="3076.6" y="1485.2" width="24" height="20" fill="rgba(34,197,94,0.8)"/><text x="3111.0" y="1501.0" font-size="20" fill="#666">Medical Necessity Evaluator</text><rect x="3076.6" y="1525.2" width="24" height="20" fill="rgba(20,184,166,0.8)"/><text x="3111.0" y="1541.0" font-size="20" fill="#666">Financial Exposure Calculator</text><rect x="3076.6" y="1565.2" width="24" height="20" fill="rgba(99,102,241,0.8)"/><text x="3111.0" y="1581.0" font-size="20" fill="#666">Legal Strategy</text><rect x="3076.6" y="1605.2" width="24" height="20" fill="rgba(236,72,153,0.8)"/><text x="3111.0" y="1621.0" font-size="20" fill="#666">Decision Synthesis</text><rect x="3076.6" y="1645.2" width="24" height="20" fill="rgba(59,130,246,0.8)"/><text x="3111.0" y="1661.0" font-size="20" fill="#666">GLP-1 Fraud Detector</text><rect x="3076.6" y="1685.2" width="24" height="20" fill="rgba(139,92,246,0.8)"/><text x="3111.0" y="1701.0" font-size="20" fill="#666">Telehealth Fraud Analyzer</text><rect x="3076.6" y="1725.2" width="24" height="20" fill="rgba(239,68,68,0.8)"/><text x="3111.0" y="1741.0" font-size="20" fill="#666">Prior Auth Intelligence</text><rect x="3076.6" y="1765.2" width="24" height="20" fill="rgba(249,115,22,0.8)"/><text x="3111.0" y="1781.0" font-size="20" fill="#666">SDOH Risk Analyzer</text><rect x="3396.4" y="1525.2" width="24" height="20" fill="rgba(34,197,94,0.8)"/><text x="3430.8" y="1541.0" font-size="20" fill="#666">Regulatory Intelligence Monitor</text><rect x="3396.4" y="1565.2" width="24" height="20" fill="rgba(20,184,166,0.8)"/><text x="3430.8" y="1581.0" font-size="20" fill="#666">Autonomous Action Executor</text></svg>
<div class="r" style="left:560px;top:1909px;width:3216px;height:400px;background:#fff;border:2px solid #e8ebf0;border-radius:24px;box-shadow:0 2px 6px rgba(15,23,42,0.05)"></div>
<div class="t" style="left:611.0px;top:1968.2px;font-size:30.7px;color:#111827;font-weight:700;">Resource Utilization</div>
<div class="t" style="left:610.0px;top:2045.4px;font-size:27.5px;color:#4b5563;font-weight:400;">Memory Usage</div>
<div class="t" style="left:1353.0px;top:2045.0px;font-size:28px;color:#111827;font-weight:700;transform:translateX(-100%);transform-origin:100% 0;">370 MB</div>
<div class="r" style="left:610px;top:2094px;width:743px;height:24px;background:#e5e7eb;border-radius:12px"></div>
<div class="t" style="left:1401.0px;top:2045.4px;font-size:27.5px;color:#4b5563;font-weight:400;">CPU Utilization</div>
<div class="t" style="left:2144.0px;top:2045.0px;font-size:28px;color:#111827;font-weight:700;transform:translateX(-100%);transform-origin:100% 0;">45.1%</div>
<div class="r" style="left:1401px;top:2094px;width:743px;height:24px;background:#e5e7eb;border-radius:12px"></div>
<div class="t" style="left:2192.0px;top:2045.4px;font-size:27.5px;color:#4b5563;font-weight:400;">Total Tokens</div>
<div class="t" style="left:2935.0px;top:2045.0px;font-size:28px;color:#111827;font-weight:700;transform:translateX(-100%);transform-origin:100% 0;">29,914</div>
<div class="r" style="left:2192px;top:2094px;width:743px;height:24px;background:#e5e7eb;border-radius:12px"></div>
<div class="t" style="left:2983.0px;top:2045.4px;font-size:27.5px;color:#4b5563;font-weight:400;">Cache Hit Rate</div>
<div class="t" style="left:3726.0px;top:2045.0px;font-size:28px;color:#111827;font-weight:700;transform:translateX(-100%);transform-origin:100% 0;">94.3%</div>
<div class="r" style="left:2983px;top:2094px;width:743px;height:24px;background:#e5e7eb;border-radius:12px"></div>
<div class="r" style="left:610px;top:2094px;width:537px;height:24px;background:#3b82f6;border-radius:12px"></div>
<div class="r" style="left:1401px;top:2094px;width:335px;height:24px;background:#22c55e;border-radius:12px"></div>
<div class="r" style="left:2192px;top:2094px;width:832px;height:24px;background:#8b5cf6;border-radius:12px"></div>
<div class="r" style="left:2983px;top:2094px;width:701px;height:24px;background:#14b8a6;border-radius:12px"></div>
<div class="r" style="left:3824px;top:0px;width:16px;height:2160px;background:#f1f1f1;"></div>
<div class="r" style="left:3824px;top:0px;width:16px;height:2105px;background:#0288d1;border-radius:8px"></div><script>(function(){var w=window.innerWidth;if(w&&Math.abs(w-3840)>4){document.documentElement.style.zoom=(w/3840);}})();</script></body></html>
